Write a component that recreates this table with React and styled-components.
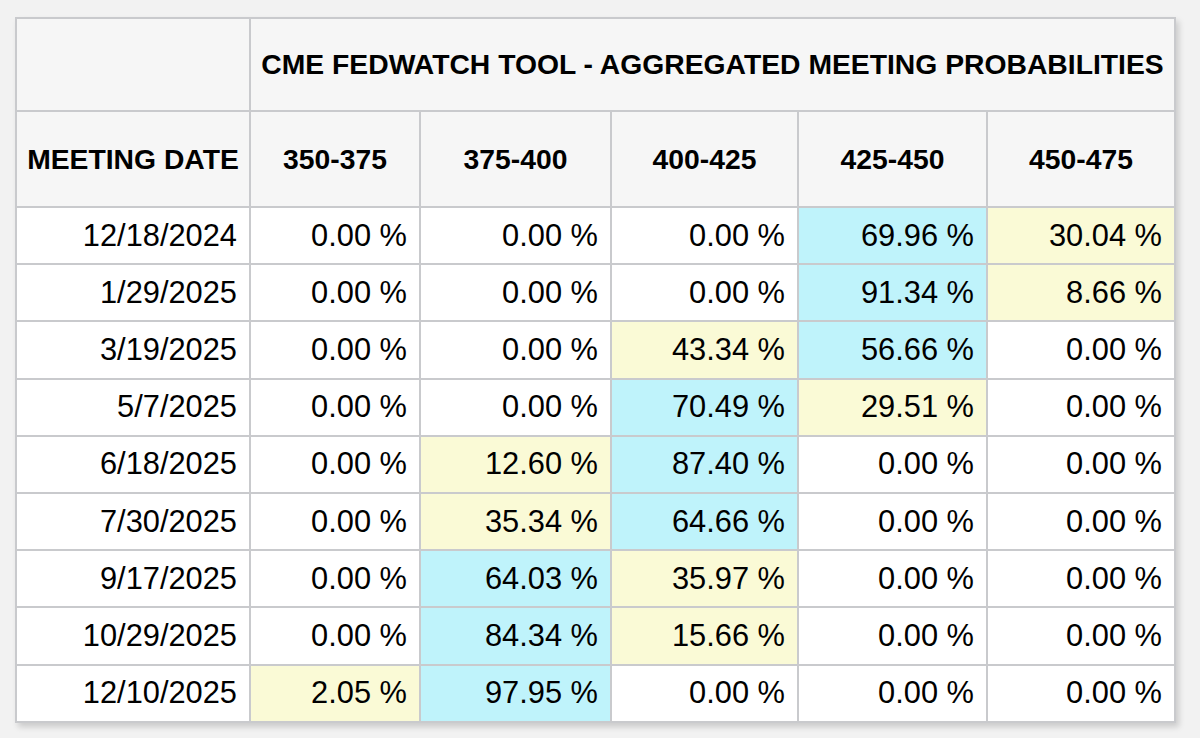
import React from 'react'
import styled, { createGlobalStyle } from 'styled-components'

const GlobalStyle = createGlobalStyle`
    html, body {
        margin: 0;
        padding: 0;
        background: #f2f2f2;
    }
    body {
        font-family: 'Liberation Sans', Arial, Helvetica, sans-serif;
        color: #000;
    }
`

const columns = ['350-375', '375-400', '400-425', '425-450', '450-475']

// c = cyan (most likely), y = yellow (second)
const rows = [
    ['12/18/2024', ['0.00', '0.00', '0.00', '69.96', '30.04'], '...cy'],
    ['1/29/2025', ['0.00', '0.00', '0.00', '91.34', '8.66'], '...cy'],
    ['3/19/2025', ['0.00', '0.00', '43.34', '56.66', '0.00'], '..yc.'],
    ['5/7/2025', ['0.00', '0.00', '70.49', '29.51', '0.00'], '..cy.'],
    ['6/18/2025', ['0.00', '12.60', '87.40', '0.00', '0.00'], '.yc..'],
    ['7/30/2025', ['0.00', '35.34', '64.66', '0.00', '0.00'], '.yc..'],
    ['9/17/2025', ['0.00', '64.03', '35.97', '0.00', '0.00'], '.cy..'],
    ['10/29/2025', ['0.00', '84.34', '15.66', '0.00', '0.00'], '.cy..'],
    ['12/10/2025', ['2.05', '97.95', '0.00', '0.00', '0.00'], 'yc...'],
]

const tones = {
    c: '#bff3fb',
    y: '#fafad6',
    '.': '#ffffff',
}

const App = () => {
    return (
        <>
            <GlobalStyle />
            <Page>
                <Grid>
                    <HeadCell />
                    <TitleCell>
                        CME FEDWATCH TOOL - AGGREGATED MEETING PROBABILITIES
                    </TitleCell>

                    <HeadCell>MEETING DATE</HeadCell>
                    {columns.map((c) => (
                        <HeadCell key={c}>{c}</HeadCell>
                    ))}

                    {rows.map(([date, values, marks]) => (
                        <React.Fragment key={date}>
                            <DataCell>{date}</DataCell>
                            {values.map((v, i) => (
                                <DataCell key={i} tone={tones[marks[i]]}>
                                    {v} %
                                </DataCell>
                            ))}
                        </React.Fragment>
                    ))}
                </Grid>
            </Page>
        </>
    )
}

export default App

const Page = styled.div`
    padding: 17px 0 0 15px;
    height: 738px;
    box-sizing: border-box;
`

const Grid = styled.div`
    display: grid;
    grid-template-columns: 232px 168px 189px 185px 187px 186px;
    grid-template-rows: 91px 94px repeat(9, 55.2px);
    gap: 2px;
    padding: 2px;
    width: 1161px;
    box-sizing: border-box;
    background: #c9cacd;
    box-shadow: 3px 4px 6px rgba(0, 0, 0, 0.16);
`

const HeadCell = styled.div`
    display: flex;
    align-items: center;
    justify-content: center;
    background: #f6f6f6;
    font-weight: 700;
    font-size: 28.3px;
    white-space: nowrap;
`

const TitleCell = styled(HeadCell)`
    grid-column: span 5;
`

const DataCell = styled.div`
    display: flex;
    align-items: center;
    justify-content: flex-end;
    padding-right: 12px;
    background: ${(p) => p.tone || '#ffffff'};
    font-size: 30.8px;
    white-space: nowrap;
`
